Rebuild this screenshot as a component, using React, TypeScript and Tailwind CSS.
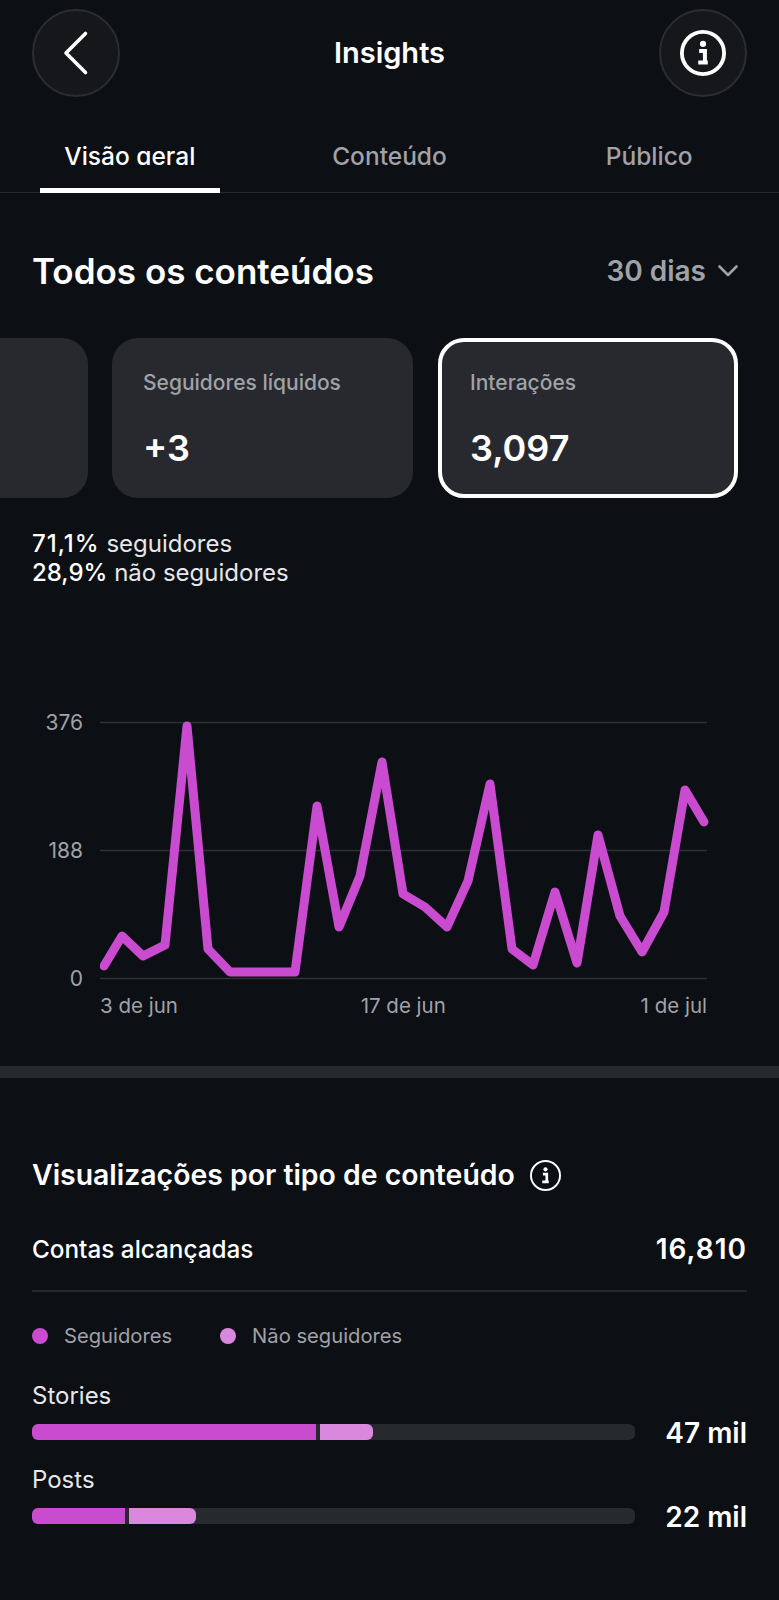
const font = { fontFamily: 'Inter, "Noto Sans", sans-serif' }

const points =
  '104,967 122,937 143,957 165,946 187,727 208,950 230,973 295,973 317,807 339,928 360,877 382,763 403,895 425,908 447,928 468,882 490,785 512,950 533,966 555,893 577,964 598,836 620,917 642,953 664,913 685,791 704,823'

const bars = [
  { name: 'Stories', total: '47 mil', first: 284, second: 53 },
  { name: 'Posts', total: '22 mil', first: 93, second: 67 },
]

const tabs = ['Visão geral', 'Conteúdo', 'Público']

const InfoIcon = ({ size, stroke }: { size: number; stroke: number }) => (
  <svg width={size} height={size} viewBox="0 0 48 48" fill="none">
    <circle cx="24" cy="24" r={24 - stroke / 2} stroke="white" strokeWidth={stroke} />
    <circle cx="24" cy="14.5" r="3.2" fill="white" />
    <path d="M20 22h6v11.5M19 34h10" stroke="white" strokeWidth="4.2" />
  </svg>
)

const RoundButton = ({ children }: { children: React.ReactNode }) => (
  <div className="flex h-[88px] w-[88px] items-center justify-center rounded-full border-2 border-[#2b2d31] bg-[#15171a]">
    {children}
  </div>
)

const StatCard = ({ label, value, active }: { label?: string; value?: string; active?: boolean }) => (
  <div
    className={`h-[160px] shrink-0 rounded-[26px] bg-[#27292e] ${
      active ? 'ml-[1px] w-[300px] border-[4px] border-white px-[28px]' : 'w-[301px] px-[31px]'
    }`}
  >
    {label && (
      <p className={`text-[21px] font-medium leading-[24px] text-[#a0a2a8] ${active ? 'mt-[29px]' : 'mt-[33px]'}`}>
        {label}
      </p>
    )}
    {value && <p className="mt-[31px] text-[36px] font-semibold leading-[44px] text-white">{value}</p>}
  </div>
)

export default function App() {
  return (
    <div style={font} className="h-[1600px] w-[779px] overflow-hidden bg-[#0c0f14] text-white">
      <header className="flex items-center justify-between px-8 pt-[9px]">
        <RoundButton>
          <svg width="30" height="46" viewBox="0 0 30 46" fill="none">
            <path d="M24.5 3.5 5 23l19.5 19.5" stroke="white" strokeWidth="3.6" strokeLinecap="round" strokeLinejoin="round" />
          </svg>
        </RoundButton>
        <h1 className="text-[29px] font-semibold">Insights</h1>
        <RoundButton>
          <InfoIcon size={46} stroke={4} />
        </RoundButton>
      </header>

      <nav className="grid h-[96px] grid-cols-3 border-b border-[#25272b]">
        {tabs.map((tab, i) => (
          <div key={tab} className="relative flex justify-center">
            <span
              className={`mt-[41px] h-[27px] overflow-hidden text-[24.5px] font-medium leading-[36px] ${
                i === 0 ? 'text-white' : 'text-[#a0a2a8]'
              }`}
            >
              {tab}
            </span>
            {i === 0 && <div className="absolute inset-x-[40px] bottom-[-1px] h-[5px] bg-white" />}
          </div>
        ))}
      </nav>

      <div className="mt-[56px] flex items-center justify-between pl-[32px] pr-[41px]">
        <h2 className="text-[35px] font-semibold leading-[44px]">Todos os conteúdos</h2>
        <div className="flex items-center gap-[12px] text-[#a0a2a8]">
          <span className="text-[28px] font-semibold">30 dias</span>
          <svg width="20" height="12" viewBox="0 0 20 12" fill="none">
            <path d="M1.5 1.5 10 10l8.5-8.5" stroke="#a0a2a8" strokeWidth="2.6" strokeLinecap="round" strokeLinejoin="round" />
          </svg>
        </div>
      </div>

      <div className="mt-[45px] flex">
        <div className="-ml-[213px] flex gap-[24px]">
          <StatCard />
          <StatCard label="Seguidores líquidos" value="+3" />
          <StatCard label="Interações" value="3,097" active />
        </div>
      </div>

      <div className="mt-[32px] pl-[32px] text-[24px] leading-[28.5px] text-[#e6e7e9]">
        <p>
          <span className="font-medium tracking-[1px] text-white">71,1%</span> seguidores
        </p>
        <p>
          <span className="font-medium text-white">28,9%</span> não seguidores
        </p>
      </div>

      <div className="mt-[128px] flex text-[20.5px] text-[#a0a2a8]">
        <div className="-mt-[7px] flex h-[286px] w-[83px] flex-col justify-between text-right text-[21px] leading-[30px]">
          <span>376</span>
          <span>188</span>
          <span>0</span>
        </div>
        <div className="ml-[17px]">
          <svg width="610" height="268" viewBox="100 715 610 268" fill="none" className="mt-[-1px] block">
            <path d="M100 723.5h607M100 851.5h607M100 979.5h607" stroke="#2f3135" strokeWidth="1.6" />
            <polyline points={points} stroke="#c94bcf" strokeWidth="9" strokeLinecap="round" strokeLinejoin="round" />
          </svg>
          <div className="mt-[9px] flex w-[607px] justify-between leading-[30px]">
            <span>3 de jun</span>
            <span className="ml-[-12px]">17 de jun</span>
            <span>1 de jul</span>
          </div>
        </div>
      </div>

      <div className="mt-[45px] h-[12px] bg-[#26292d]" />

      <section className="px-8">
        <div className="mt-[79px] flex items-center gap-[15px]">
          <h3 className="text-[28.4px] font-semibold leading-[36px]">Visualizações por tipo de conteúdo</h3>
          <InfoIcon size={31} stroke={3} />
        </div>

        <div className="mt-[40px] flex items-center justify-between border-b-2 border-[#26282c] pb-[25px]">
          <span className="text-[24.3px] font-medium leading-[32px]">Contas alcançadas</span>
          <span className="text-[28px] font-semibold leading-[32px] tracking-[1px]">16,810</span>
        </div>

        <div className="mt-[31px] flex items-center text-[20.2px] leading-[26px] text-[#a0a2a8]">
          <span className="h-4 w-4 rounded-full bg-[#c94bcf]" />
          <span className="ml-4">Seguidores</span>
          <span className="ml-[48px] h-4 w-4 rounded-full bg-[#da88de]" />
          <span className="ml-4">Não seguidores</span>
        </div>

        <div className="mt-[31px] space-y-[13px]">
          {bars.map((bar) => (
            <div key={bar.name}>
              <p className="text-[24px] leading-[32px] text-[#e6e7e9]">{bar.name}</p>
              <div className="mt-[1px] flex items-center justify-between">
                <div className="flex h-4 w-[603px] overflow-hidden rounded-[6px] bg-[#26292d]">
                  <div className="h-full bg-[#c94bcf]" style={{ width: bar.first }} />
                  <div className="ml-1 h-full rounded-r-[6px] bg-[#da88de]" style={{ width: bar.second }} />
                </div>
                <span className="mt-[2px] text-[28px] font-semibold leading-[36px]">{bar.total}</span>
              </div>
            </div>
          ))}
        </div>
      </section>
    </div>
  )
}
